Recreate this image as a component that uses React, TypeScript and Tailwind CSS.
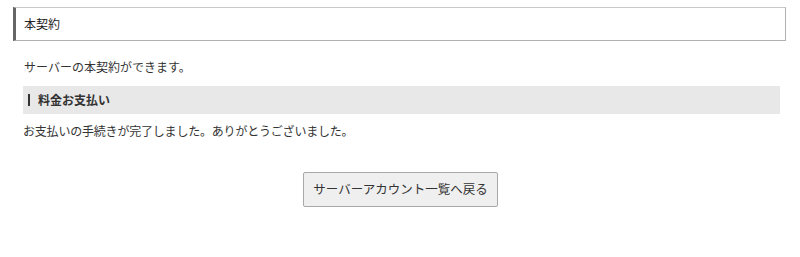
export default function App() {
    return (
        <div
            className="w-[800px] h-[257px] bg-white text-[12px] text-[#333]"
            style={{ fontFamily: '"Noto Sans CJK JP", "Noto Sans", sans-serif' }}
        >
            <div className="pt-[7px] pl-[13px] pr-[14px]">
                {/* Header */}
                <div className="h-[34px] flex items-center pl-[8px] border border-[#b0b0b0] border-t-[#c8c8c8] border-l-[3px] border-l-[#666]">
                    <h1 className="text-[12px] text-[#222] leading-none">本契約</h1>
                </div>
            </div>

            <div className="pl-[23px] pr-[20px]">
                <p className="mt-[18px] leading-[16px] pl-[1px]">サーバーの本契約ができます。</p>

                {/* Section */}
                <div className="mt-[11px] h-[28px] bg-[#e8e8e8] flex items-center pl-[5px]">
                    <span className="w-[2px] h-[12px] bg-[#333] mr-[8px]" />
                    <h2 className="font-bold text-[12px] text-[#333] leading-none">料金お支払い</h2>
                </div>

                <p className="mt-[9px] leading-[16px] tracking-[-0.2px]">お支払いの手続きが完了しました。ありがとうございました。</p>

                <div className="mt-[33px] flex justify-center pr-[2px]">
                    <button className="w-[195px] h-[35px] bg-[#efefef] border border-[#a8a8a8] rounded-[2px] text-[12.5px] text-[#333] leading-none">
                        サーバーアカウント一覧へ戻る
                    </button>
                </div>
            </div>
        </div>
    );
}
